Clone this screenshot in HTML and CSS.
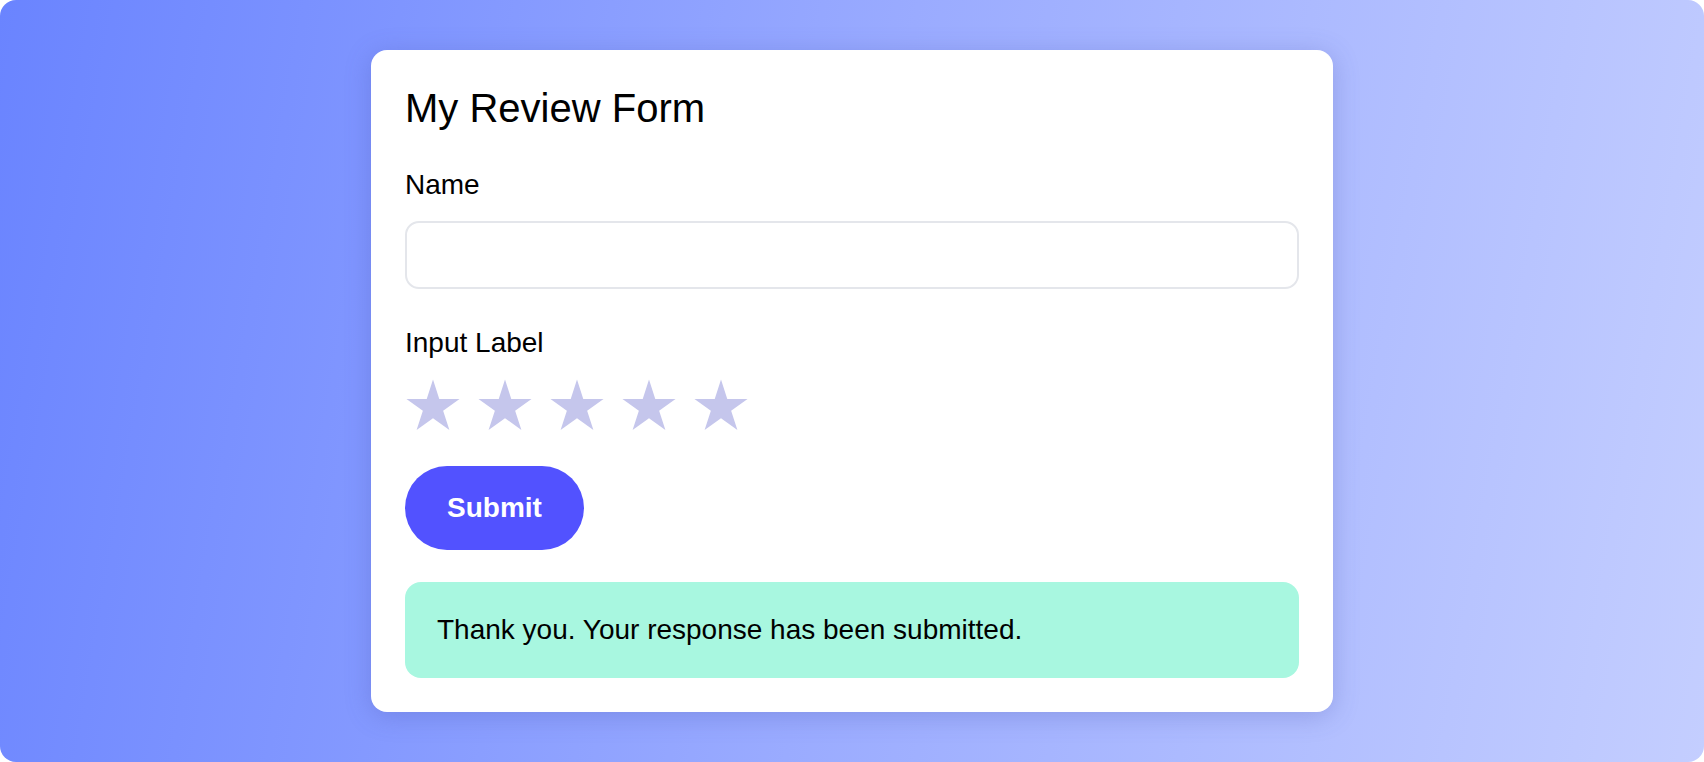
FILE: index.html
```html
<!DOCTYPE html>
<html lang="en">
<head>
<meta charset="utf-8">
<title>My Review Form</title>
<link rel="stylesheet" href="styles.css">
</head>
<body>
<div class="stage">
  <form class="card">
    <h1 class="title">My Review Form</h1>
    <div class="group">
      <label class="label" for="name">Name</label>
      <input class="text-input" id="name" type="text">
    </div>
    <div class="group">
      <div class="label">Input Label</div>
      <div class="stars">
        <svg class="star" viewBox="0 0 56 52"><polygon points="28,0.6 34.27,19.88 54.54,19.88 38.14,31.79 44.4,51.07 28,39.16 11.6,51.07 17.86,31.79 1.46,19.88 21.73,19.88"/></svg>
        <svg class="star" viewBox="0 0 56 52"><polygon points="28,0.6 34.27,19.88 54.54,19.88 38.14,31.79 44.4,51.07 28,39.16 11.6,51.07 17.86,31.79 1.46,19.88 21.73,19.88"/></svg>
        <svg class="star" viewBox="0 0 56 52"><polygon points="28,0.6 34.27,19.88 54.54,19.88 38.14,31.79 44.4,51.07 28,39.16 11.6,51.07 17.86,31.79 1.46,19.88 21.73,19.88"/></svg>
        <svg class="star" viewBox="0 0 56 52"><polygon points="28,0.6 34.27,19.88 54.54,19.88 38.14,31.79 44.4,51.07 28,39.16 11.6,51.07 17.86,31.79 1.46,19.88 21.73,19.88"/></svg>
        <svg class="star" viewBox="0 0 56 52"><polygon points="28,0.6 34.27,19.88 54.54,19.88 38.14,31.79 44.4,51.07 28,39.16 11.6,51.07 17.86,31.79 1.46,19.88 21.73,19.88"/></svg>
      </div>
    </div>
    <div class="actions">
      <button class="submit" type="button">Submit</button>
    </div>
    <div class="success">Thank you. Your response has been submitted.</div>
  </form>
</div>
</body>
</html>
```

FILE: styles.css
```css
* { box-sizing: border-box; }

html, body {
  margin: 0;
  padding: 0;
  background: #ffffff;
}

body {
  font-family: "Liberation Sans", Arial, Helvetica, sans-serif;
  color: #000;
}

.stage {
  width: 1704px;
  height: 762px;
  border-radius: 16px;
  background: linear-gradient(100deg, #6a84ff 0%, #9aabff 50%, #c4ceff 100%);
  display: flex;
  align-items: center;
  justify-content: center;
}

.card {
  width: 962px;
  background: #ffffff;
  border-radius: 16px;
  padding: 35px 34px 34px;
  box-shadow: 0 4px 26px rgba(70, 80, 170, 0.28);
  display: flex;
  flex-direction: column;
}

.title {
  margin: 0;
  font-size: 40px;
  line-height: 46px;
  font-weight: 400;
}

.group {
  margin-top: 38px;
  display: flex;
  flex-direction: column;
}

.label {
  font-size: 28px;
  line-height: 32px;
}

.text-input {
  margin-top: 20px;
  height: 68px;
  width: 100%;
  border: 2px solid #e4e6eb;
  border-radius: 14px;
  background: #fff;
  font: inherit;
  padding: 0 20px;
  outline: none;
}

.stars {
  margin-top: 20px;
  display: flex;
  gap: 16px;
}

.star {
  width: 56px;
  height: 52px;
  display: block;
}

.star polygon {
  fill: #c5c6ec;
}

.actions {
  margin-top: 35px;
  display: flex;
}

.submit {
  height: 84px;
  padding: 0 42px;
  border: none;
  border-radius: 42px;
  background: #5252ff;
  color: #fff;
  font-family: "Liberation Sans", Arial, Helvetica, sans-serif;
  font-size: 28px;
  font-weight: 700;
  cursor: pointer;
}

.success {
  margin-top: 32px;
  background: #a8f7e0;
  border-radius: 16px;
  padding: 32px 33px 32px 32px;
  font-size: 28px;
  line-height: 32px;
}
```
